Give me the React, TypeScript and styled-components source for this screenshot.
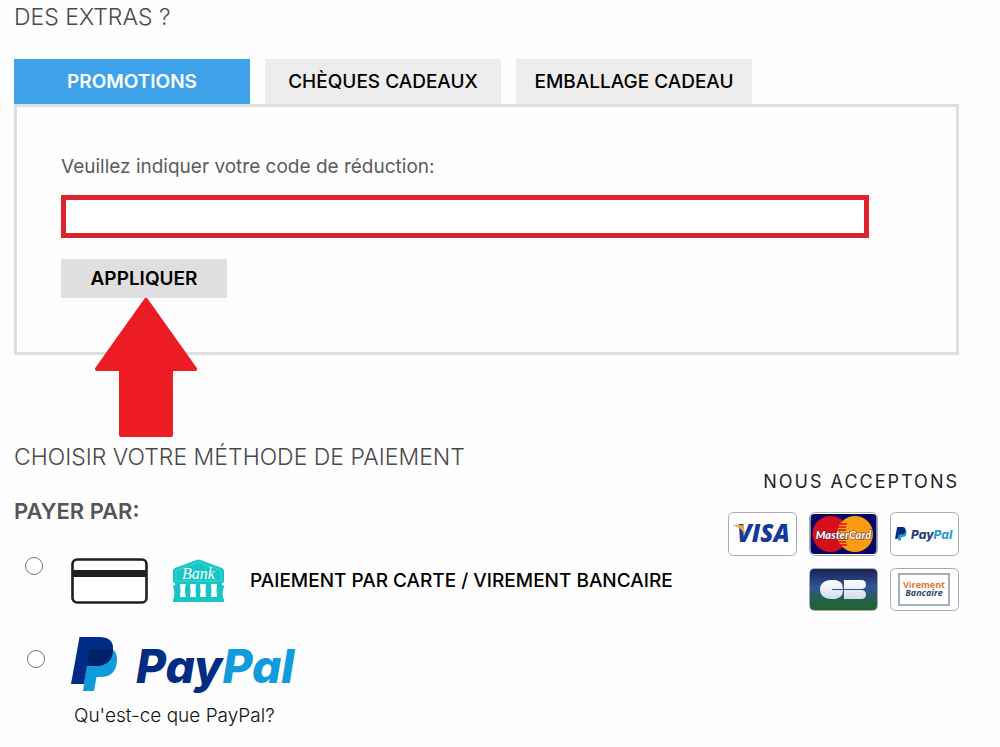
import React from "react";
import styled, { createGlobalStyle } from "styled-components";

const GlobalStyle = createGlobalStyle`
  *, *::before, *::after { box-sizing: border-box; }
  body {
    margin: 0;
    background: #fefefe;
    color: #000;
    font-family: Inter, "Liberation Sans", sans-serif;
  }
`;

const Page = styled.main`
  padding: 1px 41px 16px 14px;
`;

const Heading = styled.h2`
  margin: 0;
  font-size: 23px;
  line-height: 32px;
  font-weight: 300;
  color: #4a4a4a;
`;

const SubHeading = styled.h3`
  margin: 0;
  font-size: 22px;
  line-height: 32px;
  font-weight: 600;
  color: #555;
`;

const Tabs = styled.div`
  display: flex;
  gap: 15px;
  margin-top: 26px;
`;

const Tab = styled.button<{ $active?: boolean }>`
  width: 236px;
  height: 45px;
  padding: 0;
  border: 0;
  background: ${(p) => (p.$active ? "#3ea2eb" : "#ededed")};
  color: ${(p) => (p.$active ? "#fff" : "#000")};
  font: ${(p) => (p.$active ? 600 : 500)} 19px/24px Inter, "Liberation Sans", sans-serif;
  cursor: pointer;
`;

const Panel = styled.form`
  padding: 48px 44px 54px;
  border: 3px solid #dedede;
`;

const CodeLabel = styled.label`
  display: block;
  font-size: 19px;
  line-height: 24px;
  color: #5c5c5c;
`;

const CodeInput = styled.input`
  display: block;
  width: 95%;
  height: 43px;
  margin: 16px 0 21px;
  padding: 0 12px;
  border: 5px solid #dc222c;
  background: #fff;
  font-size: 19px;
`;

const ApplyWrap = styled.div`
  position: relative;
  width: 166px;
`;

const ApplyButton = styled.button`
  display: block;
  width: 100%;
  height: 39px;
  padding: 0;
  border: 0;
  border-radius: 1px;
  background: #dfdfdf;
  color: #000;
  font: 600 19px/24px Inter, "Liberation Sans", sans-serif;
  cursor: pointer;
`;

const Arrow = styled.svg`
  position: absolute;
  top: 100%;
  left: 34px;
  width: 102px;
  height: 139px;
  pointer-events: none;
`;

const Payment = styled.section`
  display: flex;
  justify-content: space-between;
  margin-top: 86px;
`;

const Methods = styled.div`
  display: flex;
  flex-direction: column;
`;

const MethodList = styled.fieldset`
  min-width: 0;
  margin: 0;
  padding: 0;
  border: 0;
`;

const MethodTitle = styled.legend`
  padding: 22px 0 30px;
`;

const Method = styled.div`
  display: flex;
  align-items: flex-start;
  padding-left: 11px;
`;

const Radio = styled.input`
  flex: none;
  width: 18px;
  height: 18px;
  margin: 0 28px 0 0;
`;

const CardLabel = styled.label`
  display: flex;
  align-items: center;
  gap: 24px;
  margin-top: 1px;
  font-size: 19px;
  line-height: 24px;
  font-weight: 500;
  white-space: nowrap;
`;

const PaypalMethod = styled(Method)`
  padding-left: 13px;
  margin-top: 33px;

  ${Radio} {
    margin-top: 13px;
    margin-right: 26px;
  }
`;

const PaypalLabel = styled.label`
  display: block;
`;

const Art = styled.svg`
  display: block;
  flex: none;
`;

const HelpLink = styled.a`
  display: inline-block;
  margin: 11px 0 0 60px;
  font-size: 19px;
  line-height: 24px;
  font-weight: 300;
  color: #111;
  text-decoration: none;
`;

const Accepted = styled.aside`
  display: flex;
  flex-direction: column;
  align-items: flex-end;
  padding-top: 29px;
`;

const AcceptedTitle = styled.h3`
  margin: 0 0 18px;
  font-size: 18px;
  line-height: 24px;
  font-weight: 400;
  letter-spacing: 2px;
  color: #222;
`;

const Badges = styled.div`
  display: flex;
  flex-wrap: wrap;
  justify-content: flex-end;
  gap: 12px;
  width: 232px;
`;

const CardArt = () => (
  <Art width="77" height="46" viewBox="0 0 77 46" aria-hidden="true">
    <rect x="1.5" y="1.5" width="74" height="43" rx="4.5" fill="#fff" stroke="#231f20" strokeWidth="2.6" />
    <rect x="1" y="12" width="75" height="7" fill="#231f20" />
  </Art>
);

const BankArt = () => (
  <Art width="54" height="46" viewBox="0 0 54 46" role="img" aria-label="Bank">
    <path d="M24.500 2q2-1 4 0L50 10q2 1 2 3v10q0 2-2 2H3q-2 0-2-2V13q0-2 2-3Z" fill="#16c5c5" />
    <path d="M26.500 4 49 12.500V23H4V12.500Z" fill="none" stroke="#5fdcda" strokeWidth=".7" />
    <path d="M3 24h47v3q2 0 2 2-2 4-1 11 1 0 1 2v2H1v-2q0-2 1-2 1-7-1-11 0-2 2-2Z" fill="#16c5c5" />
    <g fill="#fff">
      <path d="M8 26h6q-2 6 0 13H8q1-6 0-13Z" />
      <path d="M18 26h6q-1 6 0 13h-6q1-6 0-13Z" />
      <path d="M28 26h6q-1 6 0 13h-6q1-6 0-13Z" />
      <path d="M39 26h6q-1 6 0 13h-6q1-6 0-13Z" />
    </g>
    <text x="26.500" y="21" textAnchor="middle" fontFamily="'Liberation Serif', serif" fontStyle="italic" fontSize="16" fill="#fff">
      Bank
    </text>
  </Art>
);

const Monogram = () => (
  <>
    <path d="M18 12h23q5 3 5 10 0 18-17 18h-3.500L23 54H12Z" fill="#0f9bdc" />
    <path d="M8.500 0H30q12 1 12 11 0 18-18 18h-8l-3 18H0Z" fill="#002c88" />
    <path d="M18.500 12H42q0 17-18 17h-8Z" fill="#00206c" />
  </>
);

const Wordmark = styled.text`
  font-family: Inter, "Liberation Sans", sans-serif;
  font-weight: 800;
  font-style: italic;
  font-feature-settings: "cv11" 1;
`;

const PaypalArt = () => (
  <Art width="228" height="56" viewBox="0 0 228 56" role="img" aria-label="PayPal">
    <Monogram />
    <Wordmark x="65" y="46" fontSize="46">
      <tspan fill="#002c83">Pay</tspan>
      <tspan fill="#0f9bdc">Pal</tspan>
    </Wordmark>
  </Art>
);

const VisaBadge = () => (
  <Art width="69" height="44" viewBox="0 0 69 44" role="img" aria-label="Visa">
    <rect x=".5" y=".5" width="68" height="43" rx="5" fill="#fff" stroke="#a9abb3" />
    <text x="9" y="30" fontFamily="'Open Sans', sans-serif" fontWeight="800" fontStyle="italic" fontSize="24" fill="#14399a">
      VISA
    </text>
    <path d="M4 13h9q3 0 3 3l1 7Q13 15 4 13Z" fill="#efaa3c" />
  </Art>
);

const MastercardBadge = () => (
  <Art width="69" height="44" viewBox="0 0 69 44" role="img" aria-label="MasterCard">
    <rect x=".5" y=".5" width="68" height="43" rx="5" fill="#fff" stroke="#a9abb3" />
    <rect x="1.500" y="2" width="66" height="40" rx="4" fill="#060864" />
    <circle cx="21.500" cy="22" r="18" fill="#d5101c" />
    <circle cx="46" cy="22" r="18" fill="#fb9b13" />
    <path d="M31 12h7M29 15h8M29 18h8M29 27h8M29 30h8M31 33h7" stroke="#d5101c" strokeWidth="1.500" />
    <text x="34.500" y="27" textAnchor="middle" fontFamily="Lato, sans-serif" fontWeight="900" fontStyle="italic" fontSize="11" fill="#fff" stroke="#5b1a2a" strokeWidth="1" paintOrder="stroke">
      MasterCard
    </text>
  </Art>
);

const PaypalBadge = () => (
  <Art width="69" height="44" viewBox="0 0 69 44" role="img" aria-label="PayPal">
    <rect x=".5" y=".5" width="68" height="43" rx="5" fill="#fff" stroke="#a9abb3" />
    <g transform="translate(5 15) scale(.25)">
      <Monogram />
    </g>
    <Wordmark x="21" y="27" fontSize="12">
      <tspan fill="#263c78">Pay</tspan>
      <tspan fill="#2f9dd0">Pal</tspan>
    </Wordmark>
  </Art>
);

const CbBadge = () => (
  <Art width="69" height="43" viewBox="0 0 69 43" role="img" aria-label="CB">
    <defs>
      <linearGradient id="cb" x1="0" y1="0" x2="0" y2="1">
        <stop offset="0" stopColor="#1c2350" />
        <stop offset=".45" stopColor="#30549c" />
        <stop offset=".7" stopColor="#245f55" />
        <stop offset="1" stopColor="#23662e" />
      </linearGradient>
      <linearGradient id="cbMark" gradientUnits="userSpaceOnUse" x1="0" y1="12" x2="0" y2="31">
        <stop offset="0" stopColor="#fff" />
        <stop offset="1" stopColor="#cfdcec" />
      </linearGradient>
    </defs>
    <rect x=".5" y=".5" width="68" height="42" rx="5" fill="#fff" stroke="#a9abb3" />
    <rect x="1" y="1" width="67" height="41" rx="4" fill="url(#cb)" />
    <path d="M21 12h5q8 1 8 9H23v1h11q0 8-8 9h-5q-10-1-10-9.500T21 12Z" fill="url(#cbMark)" />
    <path d="M35 12h17q5 0 5 4.500T52 21H35Zm0 10h17q5 0 5 4.500T52 31H35Z" fill="url(#cbMark)" />
  </Art>
);

const TransferBadge = () => (
  <Art width="69" height="43" viewBox="0 0 69 43" role="img" aria-label="Virement Bancaire">
    <rect x=".5" y=".5" width="68" height="42" rx="5" fill="#fff" stroke="#a9abb3" />
    <rect x="9" y="6" width="50" height="31" fill="#fff" stroke="#8496a6" strokeWidth="1.500" />
    <g fontFamily="'Open Sans', sans-serif" fontWeight="700" fontSize="9" textAnchor="middle">
      <text x="34" y="20" fill="#df7a35">Virement</text>
      <text x="34" y="28" fill="#33475f" fontStyle="italic">Bancaire</text>
    </g>
  </Art>
);

export default function App() {
  return (
    <>
      <GlobalStyle />
      <Page>
        <Heading>DES EXTRAS ?</Heading>
        <Tabs role="tablist">
          <Tab type="button" role="tab" aria-selected="true" $active>PROMOTIONS</Tab>
          <Tab type="button" role="tab" aria-selected="false">CHÈQUES CADEAUX</Tab>
          <Tab type="button" role="tab" aria-selected="false">EMBALLAGE CADEAU</Tab>
        </Tabs>
        <Panel onSubmit={(e) => e.preventDefault()}>
          <CodeLabel htmlFor="code">Veuillez indiquer votre code de réduction:</CodeLabel>
          <CodeInput id="code" type="text" />
          <ApplyWrap>
            <ApplyButton type="submit">APPLIQUER</ApplyButton>
            <Arrow viewBox="0 0 102 139" aria-hidden="true">
              <path
                d="M51 2 100 71H76v66H26V71H2Z"
                fill="#ed1c24"
                stroke="#ed1c24"
                strokeWidth="4"
                strokeLinejoin="round"
              />
            </Arrow>
          </ApplyWrap>
        </Panel>
        <Payment>
          <Methods>
            <Heading>CHOISIR VOTRE MÉTHODE DE PAIEMENT</Heading>
            <MethodList>
              <MethodTitle>
                <SubHeading>PAYER PAR:</SubHeading>
              </MethodTitle>
              <Method>
                <Radio type="radio" name="method" id="card" />
                <CardLabel htmlFor="card">
                  <CardArt />
                  <BankArt />
                  PAIEMENT PAR CARTE / VIREMENT BANCAIRE
                </CardLabel>
              </Method>
              <PaypalMethod>
                <Radio type="radio" name="method" id="paypal" />
                <PaypalLabel htmlFor="paypal">
                  <PaypalArt />
                </PaypalLabel>
              </PaypalMethod>
            </MethodList>
            <div>
              <HelpLink href="#paypal">Qu'est-ce que PayPal?</HelpLink>
            </div>
          </Methods>
          <Accepted>
            <AcceptedTitle>NOUS ACCEPTONS</AcceptedTitle>
            <Badges>
              <VisaBadge />
              <MastercardBadge />
              <PaypalBadge />
              <CbBadge />
              <TransferBadge />
            </Badges>
          </Accepted>
        </Payment>
      </Page>
    </>
  );
}
